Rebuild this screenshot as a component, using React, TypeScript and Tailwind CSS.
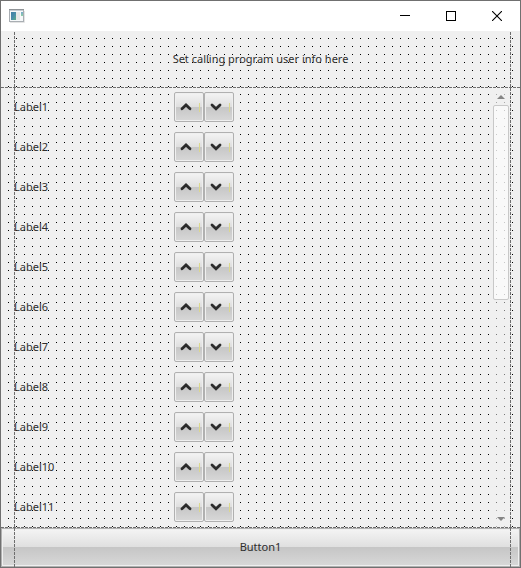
import { clsx } from "clsx";

const rows = Array.from({ length: 11 }, (_, i) => `Label${i + 1}`);

const WindowIcon = () => (
  <svg width="16" height="14" viewBox="0 0 16 14" aria-hidden="true">
    <defs>
      <linearGradient id="pane" x1="0" y1="0" x2="1" y2="1">
        <stop offset="0" stopColor="#3f7fa3" />
        <stop offset="0.5" stopColor="#4a8cab" />
        <stop offset="1" stopColor="#5cae86" />
      </linearGradient>
      <linearGradient id="side" x1="0" y1="0" x2="0" y2="1">
        <stop offset="0" stopColor="#78a9cf" />
        <stop offset="1" stopColor="#8fd0a4" />
      </linearGradient>
    </defs>
    <path d="M15.500 2v11.500H1" fill="none" stroke="#e4e4e4" />
    <rect x="0.5" y="0.5" width="14" height="12" fill="#f7f9fa" stroke="#a9aeb3" />
    <path d="M0 0.500h15" stroke="#8f9396" />
    <path d="M1 1.500h13" stroke="#c5ccd2" />
    <rect x="2" y="3" width="5" height="8" fill="url(#pane)" />
    <rect x="7" y="3" width="4" height="8" fill="#e6e8e8" />
    <rect x="12" y="3" width="2" height="4" fill="url(#side)" />
  </svg>
);

const TitleBar = () => (
  <header className="flex h-[30px] shrink-0 items-center justify-between bg-white pl-2">
    <WindowIcon />
    <div className="flex h-full">
      <button aria-label="Minimize" className="flex w-[46px] items-center justify-center">
        <svg width="10" height="10" viewBox="0 0 10 10" shapeRendering="crispEdges">
          <path d="M0 4.500h10" stroke="#000" />
        </svg>
      </button>
      <button aria-label="Maximize" className="flex w-[46px] items-center justify-center">
        <svg width="10" height="10" viewBox="0 0 10 10" shapeRendering="crispEdges">
          <rect x="0.5" y="0.5" width="9" height="9" fill="none" stroke="#000" />
        </svg>
      </button>
      <button aria-label="Close" className="flex w-[46px] items-center justify-center">
        <svg width="10" height="10" viewBox="0 0 10 10">
          <path d="M0 0l10 10M10 0L0 10" stroke="#000" strokeWidth="1.1" />
        </svg>
      </button>
    </div>
  </header>
);

const ArrowButton = ({ label, down }: { label: string; down?: boolean }) => (
  <button
    aria-label={label}
    className="flex size-[30px] items-center justify-between rounded-xs border border-[#b0b0b0] bg-[linear-gradient(#f4f4f4,#dfdfdf_50%,#c6c6c6_50%,#d8d8d8)] pr-[3px] pl-[5px] shadow-[inset_0_0_0_1px_#efefef]"
  >
    <svg width="12" height="8" viewBox="0 0 12 8">
      <path
        d={down ? "M2 2L6 5.800L10 2" : "M2 5.800L6 2L10 5.800"}
        fill="none"
        stroke="#2b2b2b"
        strokeWidth="2.800"
        strokeLinecap="round"
      />
    </svg>
    <span className="h-[9px] w-px bg-[#dcd88c]" />
  </button>
);

const ScrollArrow = ({ down }: { down?: boolean }) => (
  <button
    aria-label={down ? "Scroll down" : "Scroll up"}
    className="flex h-[17px] shrink-0 items-center justify-center bg-[#f0f0f0]/40"
  >
    <svg width="8" height="4" viewBox="0 0 8 4">
      <path d={down ? "M0 0h8L4 4z" : "M0 4h8L4 0z"} fill="#858585" />
    </svg>
  </button>
);

const ScrollBar = () => (
  <div className="flex w-4 flex-col bg-[#f0f0f0]/50">
    <ScrollArrow />
    <div className="flex grow flex-col">
      <div className="flex-[48] rounded-xs border border-[#c8c8c8] bg-white/60" />
      <div className="flex-[52]" />
    </div>
    <ScrollArrow down />
  </div>
);

const HorizontalGuide = () => (
  <div className="h-px shrink-0 bg-[#f0f0f0] bg-[repeating-linear-gradient(90deg,#6e6e6e_0_3px,transparent_3px_4px)]" />
);

const VerticalGuide = ({ className }: { className: string }) => (
  <div
    className={clsx(
      "pointer-events-none absolute top-px bottom-0 w-px bg-[repeating-linear-gradient(#6e6e6e_0_3px,transparent_3px_4px)]",
      className
    )}
  />
);

const App = () => {
  return (
    <div className="flex min-h-screen flex-col border border-[#707070] bg-[#f0f0f0] font-['Noto_Sans',sans-serif] text-[11px] text-[#2e2e2e]">
      <TitleBar />
      {/* 8px design grid: the top layer masks the black rows down to single dots */}
      <main className="relative flex grow flex-col bg-[linear-gradient(90deg,transparent_1px,#f0f0f0_1px),linear-gradient(#000_1px,#f0f0f0_1px)] bg-[length:8px_8px] bg-[position:7px_7px]">
        <section className="flex h-14 shrink-0 items-center justify-center">
          <p>Set calling program user info here</p>
        </section>
        <HorizontalGuide />
        <section className="flex grow pr-[11px]">
          <ul className="flex grow flex-col gap-2.5 pt-1 pb-[5px] pl-[13px]">
            {rows.map((label) => (
              <li key={label} className="flex items-center">
                <span className="w-40">{label}</span>
                <ArrowButton label={`${label} up`} />
                <ArrowButton label={`${label} down`} down />
              </li>
            ))}
          </ul>
          <ScrollBar />
        </section>
        <HorizontalGuide />
        <button className="h-[39px] shrink-0 border border-[#b0b0b0] bg-[linear-gradient(#f4f4f4,#dfdfdf_50%,#c6c6c6_50%,#d8d8d8)] shadow-[inset_0_0_0_1px_#efefef]">
          Button1
        </button>
        <VerticalGuide className="left-[13px]" />
        <VerticalGuide className="right-[9px]" />
      </main>
    </div>
  );
};

export default App;
